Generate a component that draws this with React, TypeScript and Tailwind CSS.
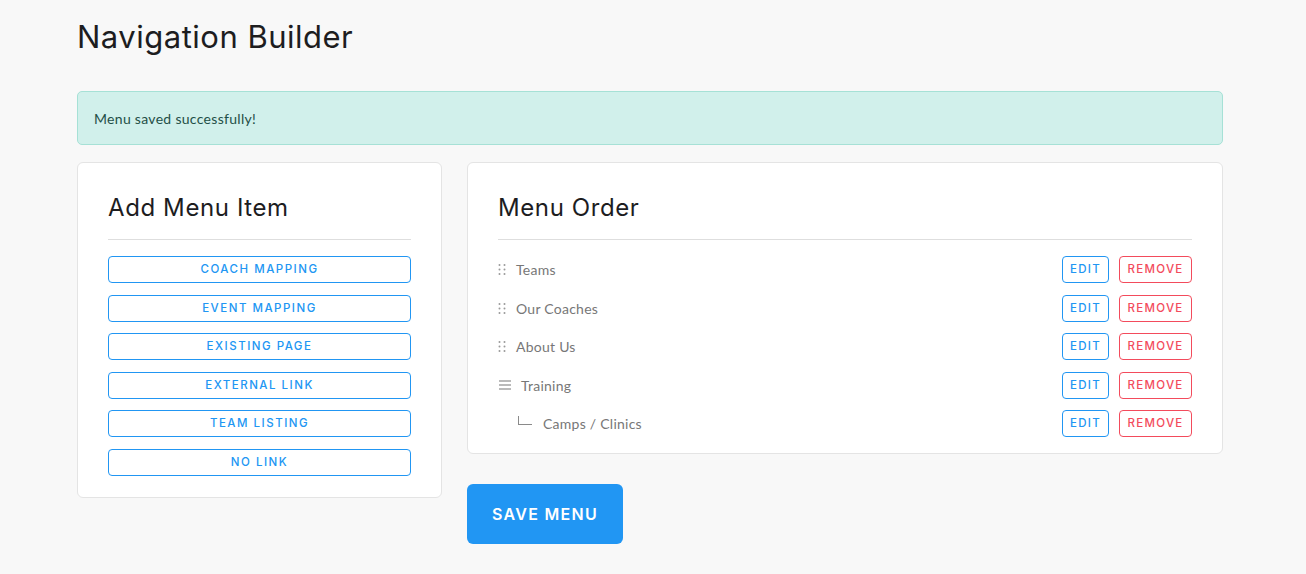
const heading = "font-['Inter','Liberation_Sans',sans-serif]";
const body = "font-['Lato','Open_Sans',sans-serif]";

const addItems = ["Coach Mapping", "Event Mapping", "Existing Page", "External Link", "Team Listing", "No Link"];

type MenuRow = { label: string; kind: "drag" | "parent" | "child" };

const menuRows: MenuRow[] = [
  { label: "Teams", kind: "drag" },
  { label: "Our Coaches", kind: "drag" },
  { label: "About Us", kind: "drag" },
  { label: "Training", kind: "parent" },
  { label: "Camps / Clinics", kind: "child" },
];

const DragDots = () => (
  <svg width="8" height="11" viewBox="0 0 8 11" className="shrink-0">
    {[1, 5.5, 10].map((y) =>
      [1.5, 6.5].map((x) => <circle key={`${x}-${y}`} cx={x} cy={y} r="1" fill="#9a9a9a" />)
    )}
  </svg>
);

const Lines = () => (
  <svg width="12" height="10" viewBox="0 0 12 10" className="shrink-0">
    <path d="M0 1h12M0 5h12M0 9h12" stroke="#777" strokeWidth="1.2" />
  </svg>
);

export default function App() {
  return (
    <div className={`min-h-[574px] bg-[#f8f8f8] ${body}`}>
      <div className="ml-[77px] w-[1146px] pt-[17px]">
        <h1 className={`${heading} text-[31px] leading-[40px] text-[#1d1d1f] font-normal tracking-[0.5px]`}>
          Navigation Builder
        </h1>

        {/* Alert */}
        <div className="mt-[34px] h-[54px] flex items-center px-[16px] bg-[#d1f0eb] border border-[#a6e1d6] rounded-[5px] text-[14px] tracking-[0.3px] text-[#1f4f47]">
          Menu saved successfully!
        </div>

        <div className="mt-[17px] flex items-start gap-[25px]">
          {/* Add menu item */}
          <div className="w-[365px] bg-white border border-[#e4e4e4] rounded-[6px] px-[30px] pt-[30px] pb-[21px]">
            <h2 className={`${heading} text-[24px] leading-[29px] text-[#1d1d1f] font-normal tracking-[0.6px]`}>Add Menu Item</h2>
            <div className="mt-[17px] h-px bg-[#dedede]" />
            <div className="mt-[16px] flex flex-col gap-[11.5px]">
              {addItems.map((t) => (
                <button
                  key={t}
                  className={`${heading} h-[27px] w-full pt-px border border-[#2196f3] rounded-[4px] text-[#2196f3] text-[11.5px] font-medium uppercase tracking-[1.5px]`}
                >
                  {t}
                </button>
              ))}
            </div>
          </div>

          {/* Menu order */}
          <div className="flex-1 flex flex-col">
            <div className="bg-white border border-[#e4e4e4] rounded-[6px] px-[30px] pt-[30px] pb-[16px]">
              <h2 className={`${heading} text-[24px] leading-[29px] text-[#1d1d1f] font-normal tracking-[0.6px]`}>Menu Order</h2>
              <div className="mt-[17px] h-px bg-[#dedede]" />
              <div className="mt-[16px] flex flex-col gap-[11.5px]">
                {menuRows.map((r) => (
                  <div key={r.label} className="h-[27px] flex items-center text-[14px] tracking-[0.25px] text-[#777]">
                    {r.kind === "drag" && (
                      <div className="flex items-center gap-[10px]">
                        <DragDots />
                        <span>{r.label}</span>
                      </div>
                    )}
                    {r.kind === "parent" && (
                      <div className="flex items-center gap-[10px] pl-px">
                        <Lines />
                        <span>{r.label}</span>
                      </div>
                    )}
                    {r.kind === "child" && (
                      <div className="flex items-center gap-[11px] pl-[20px]">
                        <span className="w-[14px] h-[9px] border-l border-b border-[#8a8a8a] -mt-[6px]" />
                        <span>{r.label}</span>
                      </div>
                    )}
                    <div className="ml-auto flex gap-[10px]">
                      <button className={`${heading} h-[27px] w-[47px] pt-px border border-[#2196f3] rounded-[4px] text-[#2196f3] text-[11.5px] font-medium tracking-[1.3px]`}>
                        EDIT
                      </button>
                      <button className={`${heading} h-[27px] w-[73px] pt-px border border-[#f34b5c] rounded-[4px] text-[#f34b5c] text-[11.5px] font-medium tracking-[1.3px]`}>
                        REMOVE
                      </button>
                    </div>
                  </div>
                ))}
              </div>
            </div>
            <div>
              <button className={`${heading} mt-[30px] h-[60px] w-[156px] bg-[#2196f3] rounded-[6px] text-white text-[16px] font-semibold tracking-[1.3px]`}>
                SAVE MENU
              </button>
            </div>
          </div>
        </div>
      </div>
    </div>
  );
}
